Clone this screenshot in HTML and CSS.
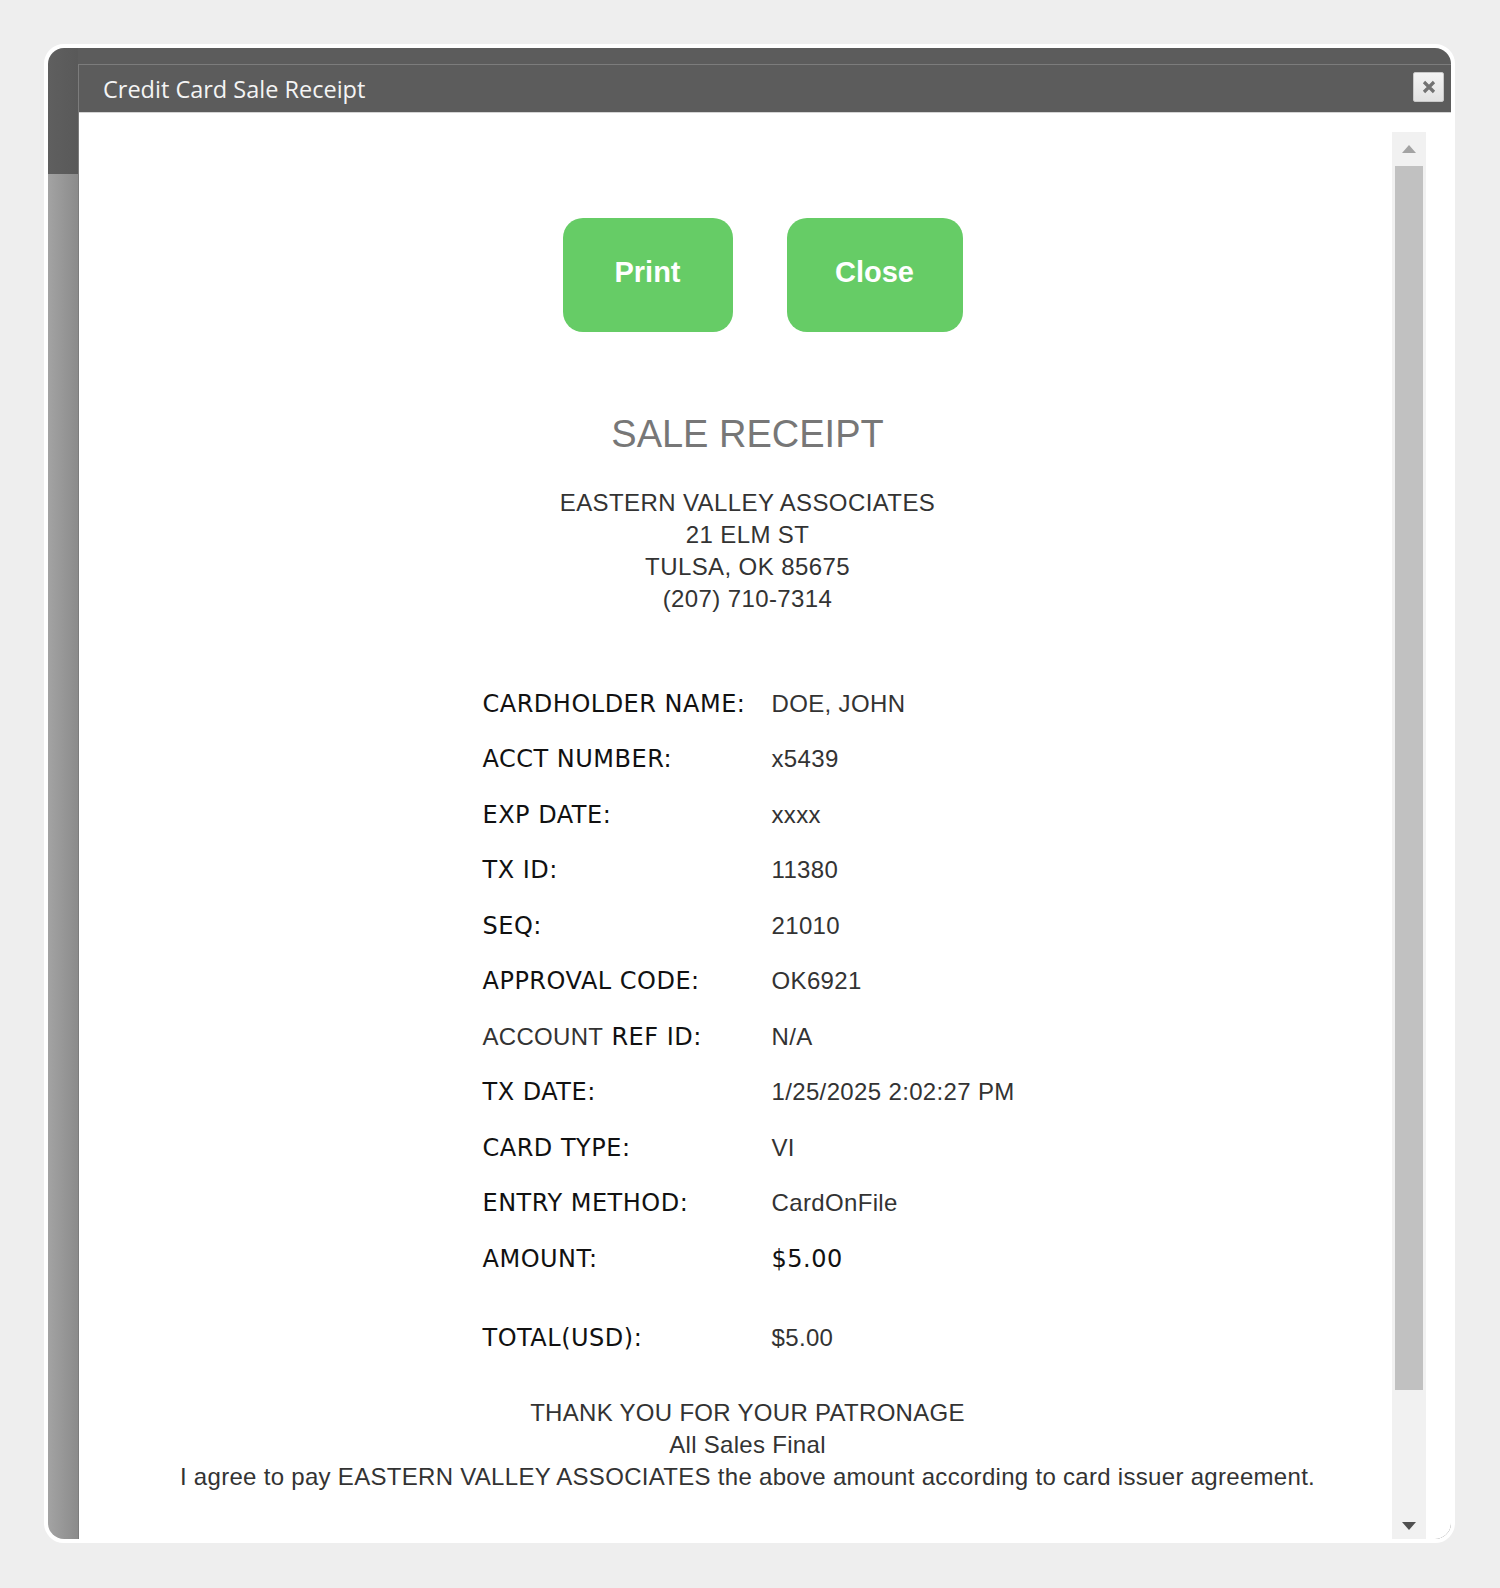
FILE: index.html
```html
<!DOCTYPE html>
<html>
<head>
<meta charset="utf-8">
<title>Credit Card Sale Receipt</title>
<link rel="stylesheet" href="styles.css">
</head>
<body>
<div class="frame">
  <div class="side">
    <div class="side-top"></div>
    <div class="side-bottom"></div>
  </div>
  <div class="window">
    <div class="window-inner">
      <div class="titlebar">
        <span class="title">Credit Card Sale Receipt</span>
        <span class="close-x">
          <svg width="14" height="14" viewBox="0 0 14 14"><path d="M2 2 L12 12 M12 2 L2 12" stroke="#727272" stroke-width="3.2" stroke-linecap="butt"/></svg>
        </span>
      </div>
      <div class="body">
        <div class="pane">
          <div class="actions">
            <button class="btn btn-print">Print</button>
            <button class="btn btn-close">Close</button>
          </div>
          <h1 class="heading">SALE RECEIPT</h1>
          <div class="address">
            <div>EASTERN VALLEY ASSOCIATES</div>
            <div>21 ELM ST</div>
            <div>TULSA, OK 85675</div>
            <div>(207) 710-7314</div>
          </div>
          <div class="details">
            <div class="lbl">CARDHOLDER NAME:</div><div class="val">DOE, JOHN</div>
            <div class="lbl">ACCT NUMBER:</div><div class="val">x5439</div>
            <div class="lbl">EXP DATE:</div><div class="val">xxxx</div>
            <div class="lbl">TX ID:</div><div class="val">11380</div>
            <div class="lbl">SEQ:</div><div class="val">21010</div>
            <div class="lbl">APPROVAL CODE:</div><div class="val">OK6921</div>
            <div class="lbl"><span class="arial">ACCOUNT</span> REF ID:</div><div class="val">N/A</div>
            <div class="lbl">TX DATE:</div><div class="val">1/25/2025 2:02:27 PM</div>
            <div class="lbl">CARD TYPE:</div><div class="val">VI</div>
            <div class="lbl">ENTRY METHOD:</div><div class="val">CardOnFile</div>
            <div class="lbl">AMOUNT:</div><div class="val val-amount">$5.00</div>
          </div>
          <div class="details details-total">
            <div class="lbl">TOTAL(USD):</div><div class="val">$5.00</div>
          </div>
          <div class="footer">
            <div>THANK YOU FOR YOUR PATRONAGE</div>
            <div>All Sales Final</div>
            <div>I agree to pay EASTERN VALLEY ASSOCIATES the above amount according to card issuer agreement.</div>
          </div>
        </div>
        <div class="scrollbar">
          <div class="sb-btn"><span class="arrow-up"></span></div>
          <div class="sb-thumb"></div>
          <div class="sb-track"></div>
          <div class="sb-btn sb-btn-down"><span class="arrow-down"></span></div>
        </div>
      </div>
    </div>
  </div>
</div>
</body>
</html>
```
FILE: styles.css
```css
html, body {
  margin: 0;
  padding: 0;
}
body {
  background: #eeeeee;
  width: 1500px;
  height: 1588px;
  overflow: hidden;
  font-family: "Liberation Sans", Arial, sans-serif;
}
.frame {
  margin: 44px 0 0 44px;
  width: 1411px;
  height: 1499px;
  box-sizing: border-box;
  border: 4px solid #ffffff;
  border-radius: 20px;
  background: #ffffff;
  overflow: hidden;
  display: flex;
}
.side {
  width: 30px;
  display: flex;
  flex-direction: column;
}
.side-top {
  height: 126px;
  background: linear-gradient(to right, #5f5f5f, #595959);
}
.side-bottom {
  flex: 1;
  background: linear-gradient(to right, #a3a3a3, #8b8b8b);
}
.window {
  flex: 1;
  padding-top: 16px;
  background: #5c5c5c;
  display: flex;
  flex-direction: column;
  min-width: 0;
}
.window-inner {
  flex: 1;
  display: flex;
  flex-direction: column;
  border-top: 1px solid #7c7c7c;
  border-left: 1px solid #7c7c7c;
  min-height: 0;
}
.titlebar {
  height: 47px;
  background: #5c5c5c;
  border-bottom: 1px solid #d4d4d4;
  display: flex;
  align-items: center;
  justify-content: space-between;
  padding: 0 7px 0 24px;
}
.title {
  font-family: "Open Sans", "Noto Sans", sans-serif;
  font-size: 23.5px;
  color: #f4f4f4;
  margin-top: 1px;
}
.close-x {
  width: 29px;
  height: 28px;
  margin-top: -4px;
  border: 1px solid #c8c8c8;
  border-radius: 2px;
  background: linear-gradient(#f4f4f4, #e2e2e2);
  display: flex;
  align-items: center;
  justify-content: center;
}
.body {
  flex: 1;
  background: #ffffff;
  display: flex;
  padding: 19px 25px 0 24px;
  min-height: 0;
}
.pane {
  flex: 1;
  overflow: hidden;
  color: #333333;
}
.actions {
  margin-top: 86px;
  display: flex;
  justify-content: center;
  gap: 54px;
  padding-left: 30px;
}
.btn {
  height: 114px;
  border: none;
  border-radius: 20px;
  background: #66cc66;
  color: #ffffff;
  font-family: "Liberation Sans", Arial, sans-serif;
  font-weight: bold;
  font-size: 29px;
  padding: 0 0 6px;
  margin: 0;
}
.btn-print { width: 170px; }
.btn-close { width: 176px; }
.heading {
  margin: 80px 0 0;
  font-weight: normal;
  font-size: 38px;
  line-height: 44px;
  color: #777777;
  text-align: center;
}
.address {
  margin-top: 31px;
  font-size: 24px;
  letter-spacing: 0.4px;
  line-height: 32px;
  text-align: center;
  color: #333333;
}
.details {
  margin: 61px auto 0;
  width: 530px;
  display: grid;
  grid-template-columns: 289px 1fr;
  grid-auto-rows: 55.5px;
  align-items: center;
}
.details-total {
  margin-top: 23.5px;
}
.lbl {
  font-family: "DejaVu Sans", Verdana, sans-serif;
  font-size: 24px;
  letter-spacing: 0.5px;
  color: #111111;
  white-space: nowrap;
}
.lbl .arial {
  font-family: "Liberation Sans", Arial, sans-serif;
  font-size: 24px;
  letter-spacing: 0.3px;
  color: #333333;
}
.val {
  font-size: 24px;
  letter-spacing: 0.35px;
  color: #333333;
  white-space: nowrap;
}
.val-amount {
  font-family: "DejaVu Sans", Verdana, sans-serif;
  font-size: 24px;
  letter-spacing: 0.5px;
  color: #111111;
}
.footer {
  margin-top: 31px;
  font-size: 24px;
  letter-spacing: 0.3px;
  line-height: 32.4px;
  text-align: center;
  color: #333333;
}
.scrollbar {
  width: 34px;
  background: #f1f1f1;
  display: flex;
  flex-direction: column;
}
.sb-btn {
  height: 34px;
  display: flex;
  align-items: center;
  justify-content: center;
}
.sb-btn-down {
  align-items: flex-end;
  padding-bottom: 9px;
  box-sizing: border-box;
}
.arrow-up {
  width: 0;
  height: 0;
  border-left: 7.5px solid transparent;
  border-right: 7.5px solid transparent;
  border-bottom: 8px solid #a3a3a3;
}
.arrow-down {
  width: 0;
  height: 0;
  border-left: 7.5px solid transparent;
  border-right: 7.5px solid transparent;
  border-top: 8px solid #505050;
}
.sb-thumb {
  height: 1224px;
  margin: 0 3px;
  background: #c1c1c1;
}
.sb-track {
  flex: 1;
}
```
